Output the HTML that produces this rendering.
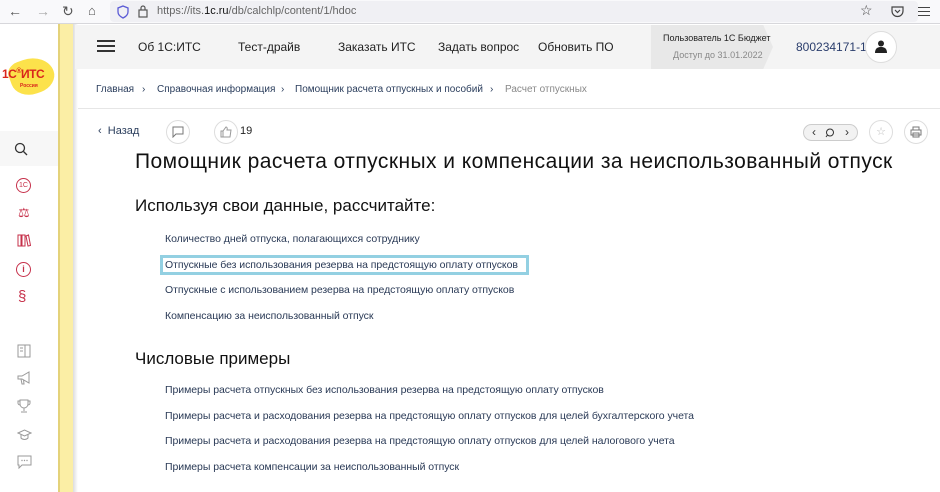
<!DOCTYPE html>
<html><head><meta charset="utf-8"><style>
*{margin:0;padding:0;box-sizing:border-box}
body{width:940px;height:492px;overflow:hidden;background:#fff;font-family:"Liberation Sans",sans-serif;position:relative}
.a{position:absolute}
.browser{left:0;top:0;width:940px;height:24px;background:#f9f9fb;border-bottom:1px solid #d7d7db}
.url{left:110px;top:1px;width:808px;height:21px;background:#f0f0f4;border-radius:4px}
.sidebar{left:0;top:24px;width:58px;height:468px;background:#fff}
.stripe{left:58px;top:24px;width:15px;height:468px;background:#fbeea5;border-left:2px solid #e4d27a}
.shadow{left:73px;top:24px;width:5px;height:468px;background:linear-gradient(90deg,#ddd,#fff)}
.hdr{left:75px;top:25px;width:865px;height:44px;background:#f4f4f4}
.nav{top:40px;font-size:12px;color:#222}
.user{left:651px;top:25px;width:122px;height:44px;background:#e8e8e8;clip-path:polygon(0 0,92% 0,100% 50%,92% 100%,0 100%)}
.bc{top:84px;font-size:10px;color:#2a3d5c}
.line{left:78px;top:108px;width:862px;height:1px;background:#e6e6e6}
.circ{border:1px solid #ddd;border-radius:50%;background:#fff}
h1{position:absolute;left:135px;top:150px;font-size:21px;font-weight:normal;color:#111;font-family:"Liberation Sans",sans-serif;white-space:nowrap;letter-spacing:0.45px}
h2{position:absolute;left:135px;font-size:17px;font-weight:normal;color:#111;font-family:"Liberation Sans",sans-serif;white-space:nowrap}
.lk{position:absolute;left:165px;font-size:10.5px;color:#2a3a56;white-space:nowrap;letter-spacing:-0.05px}
.ic{position:absolute;left:18px;font-size:13px;color:#c6304a}
svg.g{position:absolute;left:17px}
</style></head><body>
<div class="a browser"></div>
<div class="a" style="left:8px;top:3px;font-size:14px;color:#555">←</div>
<div class="a" style="left:36px;top:3px;font-size:14px;color:#aaa">→</div>
<div class="a" style="left:62px;top:3px;font-size:14px;color:#555">↻</div>
<div class="a" style="left:88px;top:3px;font-size:13px;color:#555">⌂</div>
<div class="a url"></div>
<svg class="a" style="left:117px;top:5px" width="12" height="14"><path d="M6 1L11 3V7C11 10 8 12 6 13C4 12 1 10 1 7V3Z" fill="none" stroke="#5b5bd6" stroke-width="1.3"/></svg>
<svg class="a" style="left:138px;top:4px" width="10" height="14"><rect x="1" y="6" width="8" height="7" fill="none" stroke="#555" stroke-width="1.2"/><path d="M3 6V4a2 2 0 0 1 4 0v2" fill="none" stroke="#555" stroke-width="1.2"/></svg>
<div class="a" style="left:157px;top:5px;font-size:11px;color:#666">https://its.<span style="color:#111">1c.ru</span>/db/calchlp/content/1/hdoc</div>
<div class="a" style="left:860px;top:2px;font-size:14px;color:#444">☆</div>
<svg class="a" style="left:891px;top:5px" width="13" height="13"><path d="M1 2H12V6A5.5 5.5 0 0 1 1 6Z" fill="none" stroke="#444" stroke-width="1.2"/><path d="M4 5L6.5 7.5L9 5" fill="none" stroke="#444" stroke-width="1.2"/></svg>
<div class="a" style="left:918px;top:7px;width:12px;height:1.3px;background:#444;box-shadow:0 4px 0 #444,0 8px 0 #444"></div>

<div class="a sidebar"></div>
<div class="a" style="left:10px;top:58px;width:44px;height:36px;background:#fce24b;border-radius:30% 60% 45% 50%;transform:rotate(-20deg)"></div>
<div class="a" style="left:2px;top:67px;font-size:12px;font-weight:bold;color:#d9261c;letter-spacing:-0.5px">1С<sup style="font-size:7px">®</sup>ИТС</div>
<div class="a" style="left:20px;top:83px;font-size:5px;color:#d9261c;font-weight:bold">Россия</div>
<div class="a" style="left:0;top:131px;width:58px;height:35px;background:#f7f7f7"></div>
<svg class="a" style="left:14px;top:142px" width="14" height="14"><circle cx="6" cy="6" r="4.5" fill="none" stroke="#333" stroke-width="1.3"/><path d="M9.5 9.5L13 13" stroke="#333" stroke-width="1.3"/></svg>
<div class="a" style="left:16px;top:178px;width:15px;height:15px;border:1px solid #c6304a;border-radius:50%;font-size:7px;color:#c6304a;text-align:center;line-height:13px">1С</div>
<div class="ic" style="top:205px">⚖</div>
<svg class="a" style="left:17px;top:233px" width="14" height="14"><path d="M1 2H4V13H1ZM5 2H8V13H5ZM9 3L11.5 2L13.5 12.5L11 13Z" fill="none" stroke="#c6304a" stroke-width="1"/></svg>
<div class="a" style="left:16px;top:262px;width:15px;height:15px;border:1px solid #c6304a;border-radius:50%;font-size:9px;color:#c6304a;text-align:center;line-height:13px;font-weight:bold">i</div>
<div class="ic" style="top:288px;font-size:15px">§</div>
<svg class="g" style="top:344px" width="14" height="14"><rect x="1" y="1" width="12" height="12" fill="none" stroke="#999"/><path d="M8 1V13M3 4H6M3 7H6" stroke="#999"/></svg>
<svg class="g" style="top:371px" width="15" height="14"><path d="M1 5H5L12 1V12L5 8H1Z M4 8L5 13H7L6.5 8.5" fill="none" stroke="#999"/></svg>
<svg class="g" style="top:399px" width="14" height="15"><path d="M3 1H11V5A4 4 0 0 1 3 5Z M3 2H1V4A2 2 0 0 0 3 6 M11 2H13V4A2 2 0 0 1 11 6 M7 9V12 M4 13H10" fill="none" stroke="#999"/></svg>
<svg class="g" style="top:429px" width="15" height="12"><path d="M1 4L7.5 1L14 4L7.5 7Z M4 5.5V9C6 11 9 11 11 9V5.5" fill="none" stroke="#999"/></svg>
<svg class="g" style="top:455px" width="15" height="14"><path d="M1 1H14V10H5L2 13V10H1Z" fill="none" stroke="#999"/><circle cx="5" cy="5.5" r=".7" fill="#999"/><circle cx="7.5" cy="5.5" r=".7" fill="#999"/><circle cx="10" cy="5.5" r=".7" fill="#999"/></svg>
<div class="a stripe"></div>
<div class="a shadow"></div>

<div class="a hdr"></div>
<div class="a" style="left:97px;top:40px;width:18px;height:2px;background:#333;box-shadow:0 5px 0 #333,0 10px 0 #333"></div>
<div class="a nav" style="left:138px">Об 1С:ИТС</div>
<div class="a nav" style="left:238px">Тест-драйв</div>
<div class="a nav" style="left:338px">Заказать ИТС</div>
<div class="a nav" style="left:438px">Задать вопрос</div>
<div class="a nav" style="left:538px">Обновить ПО</div>
<div class="a user"></div>
<div class="a" style="left:663px;top:33px;font-size:9px;color:#222">Пользователь 1С Бюджет</div>
<div class="a" style="left:673px;top:50px;font-size:9px;color:#888">Доступ до 31.01.2022</div>
<div class="a" style="left:796px;top:40px;font-size:12px;color:#2a3d6c">800234171-1</div>
<div class="a circ" style="left:865px;top:31px;width:32px;height:32px"></div>
<svg class="a" style="left:875px;top:40px" width="12" height="13"><circle cx="6" cy="3.5" r="3" fill="#222"/><path d="M0 13C0 8 3 7 6 7S12 8 12 13Z" fill="#222"/></svg>

<div class="a bc" style="left:96px">Главная</div>
<div class="a bc" style="left:142px">›</div>
<div class="a bc" style="left:157px">Справочная информация</div>
<div class="a bc" style="left:281px">›</div>
<div class="a bc" style="left:295px">Помощник расчета отпускных и пособий</div>
<div class="a bc" style="left:490px">›</div>
<div class="a bc" style="left:505px;color:#888">Расчет отпускных</div>
<div class="a line"></div>

<div class="a" style="left:98px;top:125px;font-size:11px;color:#2a3d5c">‹ &nbsp;Назад</div>
<div class="a circ" style="left:166px;top:120px;width:24px;height:24px"></div>
<svg class="a" style="left:172px;top:126px" width="12" height="12"><path d="M1 1H11V8H4L1 11Z" fill="none" stroke="#777" stroke-width="1"/></svg>
<div class="a circ" style="left:214px;top:120px;width:24px;height:24px"></div>
<svg class="a" style="left:220px;top:126px" width="12" height="12"><path d="M1 5H3V11H1Z M3 5L6 1C7 1 7.5 2 7 4H11L10 11H3" fill="none" stroke="#999"/></svg>
<div class="a" style="left:240px;top:125px;font-size:11px;color:#222">19</div>
<div class="a" style="left:803px;top:124px;width:55px;height:17px;border:1px solid #ccc;border-radius:9px;background:#f2f2f2"></div>
<div class="a" style="left:812px;top:125px;font-size:12px;color:#333">‹</div>
<svg class="a" style="left:825px;top:128px" width="10" height="10"><circle cx="5" cy="4.5" r="3.5" fill="none" stroke="#333"/><path d="M2.5 7L1 9" stroke="#333"/></svg>
<div class="a" style="left:845px;top:125px;font-size:12px;color:#333">›</div>
<div class="a circ" style="left:869px;top:120px;width:24px;height:24px;color:#bbb;font-size:11px;text-align:center;line-height:22px">☆</div>
<div class="a circ" style="left:904px;top:120px;width:24px;height:24px"></div>
<svg class="a" style="left:910px;top:126px" width="12" height="12"><path d="M3 4V1H9V4 M1 4H11V9H1Z M3 7H9V11H3Z" fill="#fff" stroke="#777"/></svg>

<h1>Помощник расчета отпускных и компенсации за неиспользованный отпуск</h1>
<h2 style="top:196px">Используя свои данные, рассчитайте:</h2>
<div class="lk" style="top:233px">Количество дней отпуска, полагающихся сотруднику</div>
<div class="a" style="left:160px;top:255px;width:369px;height:20px;border:3px solid #93d0e2"></div>
<div class="lk" style="top:259px">Отпускные без использования резерва на предстоящую оплату отпусков</div>
<div class="lk" style="top:284px">Отпускные с использованием резерва на предстоящую оплату отпусков</div>
<div class="lk" style="top:310px">Компенсацию за неиспользованный отпуск</div>
<h2 style="top:349px">Числовые примеры</h2>
<div class="lk" style="top:384px">Примеры расчета отпускных без использования резерва на предстоящую оплату отпусков</div>
<div class="lk" style="top:410px">Примеры расчета и расходования резерва на предстоящую оплату отпусков для целей бухгалтерского учета</div>
<div class="lk" style="top:435px">Примеры расчета и расходования резерва на предстоящую оплату отпусков для целей налогового учета</div>
<div class="lk" style="top:461px">Примеры расчета компенсации за неиспользованный отпуск</div>
</body></html>
